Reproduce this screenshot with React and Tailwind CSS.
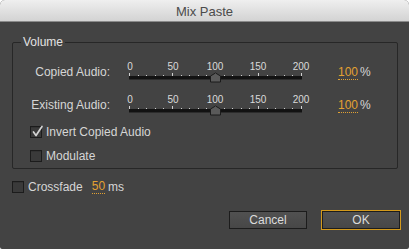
import React from 'react';

const Check = ({ checked }) => (
  <div className="relative w-[12px] h-[12px] shrink-0 border border-[#1c1c1c] bg-[#3a3a3a] shadow-[inset_0_1px_0_#333]">
    {checked && (
      <svg className="absolute left-0 top-[-2px] overflow-visible" width="12" height="13" viewBox="0 0 12 13">
        <path d="M2.5 7 L5 10.5 L11 1.5" fill="none" stroke="#d2d2d2" strokeWidth="1.7" strokeLinecap="round" strokeLinejoin="round" />
      </svg>
    )}
  </div>
);

const Slider = () => {
  const ticks = [];
  for (let i = 0; i <= 20; i++) {
    const x = Math.round(i * 8.6) + 0.5;
    const major = i % 5 === 0;
    ticks.push(
      <line key={i} x1={x} x2={x} y1={major ? 1 : 3} y2={4} stroke="#cfcfcf" strokeWidth="1" />
    );
  }
  return (
    <div className="relative w-[173px] h-[21px] text-[10px] leading-[10px] text-[#dadada]">
      <span className="absolute top-0 left-[1px] -translate-x-1/2">0</span>
      <span className="absolute top-0 left-[44px] -translate-x-1/2">50</span>
      <span className="absolute top-0 left-[86px] -translate-x-1/2">100</span>
      <span className="absolute top-0 left-[129px] -translate-x-1/2">150</span>
      <span className="absolute top-0 left-[172px] -translate-x-1/2">200</span>
      <svg className="absolute top-[10px] left-0 overflow-visible" width="173" height="11" viewBox="0 0 173 11">
        {ticks}
        <rect x="0" y="4" width="173" height="3" fill="#121212" />
        <line x1="0" x2="173" y1="7.5" y2="7.5" stroke="#2c2c2c" />
        <polygon points="81.5,10 81.5,4 86.5,1 91.5,4 91.5,10" fill="#5a5a5a" stroke="#1b1b1b" strokeWidth="1" />
      </svg>
    </div>
  );
};

const SliderRow = ({ label }) => (
  <div className="flex items-start h-[33px]">
    <div className="w-[97px] mt-[4px] text-right leading-[13px]">{label}</div>
    <div className="ml-[19px]">
      <Slider />
    </div>
    <div className="ml-[36px] mt-[4px] flex items-start leading-[13px]">
      <span className="text-[#e2a132] border-b border-dotted border-[#e2a132]">100</span>
      <span className="ml-[2px]">%</span>
    </div>
  </div>
);

export default function App() {
  return (
    <div className="w-[409px] h-[249px] bg-white font-['Liberation_Sans',Arial,sans-serif] text-[12px]">
      <div className="flex flex-col w-full h-full rounded-t-[5px] rounded-b-[2px] overflow-hidden bg-[#434343]">
        {/* title bar */}
        <div className="h-[22px] shrink-0 bg-gradient-to-b from-[#efefef] to-[#d3d3d3] border-b border-[#8a8a8a] text-center text-[13px] leading-[23px] text-[#4b4b4b]">
          Mix Paste
        </div>

        {/* body */}
        <div className="flex flex-col text-[#d6d6d6]">
          <fieldset className="ml-[12px] mr-[11px] mt-[13px] border border-[#272727] rounded-[2px] pt-[13px] pb-[5px]">
            <legend className="ml-[8px] px-[2px] leading-[14px] text-[#e2e2e2]">Volume</legend>
            <SliderRow label="Copied Audio:" />
            <div className="h-[30px]">
              <SliderRow label="Existing Audio:" />
            </div>
            <div className="flex items-center h-[14px] pl-[17px] gap-[4px]">
              <Check checked />
              <span className="leading-[14px]">Invert Copied Audio</span>
            </div>
            <div className="flex items-center h-[14px] pl-[17px] gap-[4px] mt-[10px]">
              <Check />
              <span className="leading-[14px]">Modulate</span>
            </div>
          </fieldset>

          <div className="flex items-center h-[14px] mt-[11px] pl-[12px]">
            <Check />
            <span className="ml-[4px] leading-[14px]">Crossfade</span>
            <span className="ml-[9px] leading-[13px] text-[#e2a132] border-b border-dotted border-[#e2a132]">50</span>
            <span className="ml-[3px] leading-[14px]">ms</span>
          </div>

          <div className="flex justify-end gap-[15px] mt-[17px] pr-[9px]">
            <button className="w-[78px] h-[18px] border border-[#1c1c1c] bg-gradient-to-b from-[#515151] to-[#474747] text-[12px] leading-[16px] text-[#dcdcdc]">
              Cancel
            </button>
            <button className="w-[78px] h-[18px] border border-[#1c1c1c] ring-1 ring-[#d39a1c] bg-gradient-to-b from-[#515151] to-[#474747] text-[12px] leading-[16px] text-[#dcdcdc]">
              OK
            </button>
          </div>
        </div>
      </div>
    </div>
  );
}
